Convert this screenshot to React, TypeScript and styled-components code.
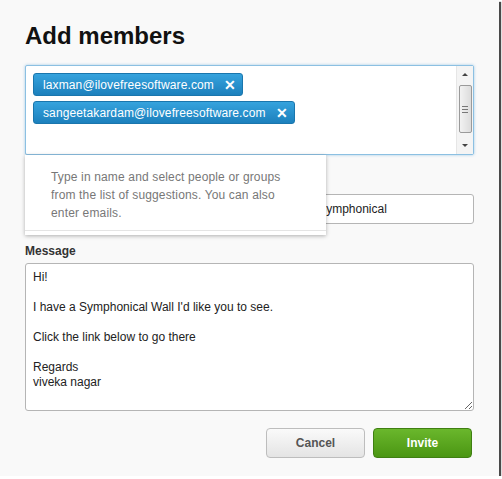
import React from 'react';
import styled, { createGlobalStyle } from 'styled-components';

const GlobalStyle = createGlobalStyle`
    html, body {
        margin: 0;
        padding: 0;
        background: #ffffff;
    }
    body {
        font-family: "Liberation Sans", Arial, sans-serif;
    }
`;

const Frame = styled.div`
    width: 499px;
    height: 476px;
    box-sizing: border-box;
    background: #f9f9f9;
    box-shadow: 2px 2px 1px #4a4a4a;
    padding: 22px 25px 0 25px;
    display: flex;
    flex-direction: column;
`;

const Title = styled.h1`
    margin: 0;
    font-size: 24px;
    line-height: 28px;
    font-weight: bold;
    color: #111;
`;

const RecipientsWrap = styled.div`
    position: relative;
    margin-top: 15px;
`;

const RecipientsBox = styled.div`
    height: 90px;
    box-sizing: border-box;
    border: 1px solid #8cc0e2;
    border-radius: 2px;
    background: #fff;
    box-shadow: 0 0 3px rgba(100, 170, 220, 0.6);
    display: flex;
`;

const ChipList = styled.div`
    flex: 1;
    padding: 7px 7px;
    display: flex;
    flex-direction: column;
    align-items: flex-start;
    gap: 5px;
`;

const Chip = styled.div`
    height: 23px;
    box-sizing: border-box;
    display: flex;
    align-items: center;
    padding: 0 6px 0 9px;
    border-radius: 3px;
    border: 1px solid #1a76ad;
    background: linear-gradient(#36a3dd, #1c80bd);
    color: #fff;
    font-size: 12px;
    letter-spacing: 0.12px;
`;

const ChipRemove = styled.span`
    margin-left: 10px;
    font-size: 14px;
    font-weight: bold;
    line-height: 1;
`;

const Scrollbar = styled.div`
    width: 16px;
    border-left: 1px solid #e6e6e6;
    background: #f4f4f4;
    display: flex;
    flex-direction: column;
    align-items: center;
`;

const Arrow = styled.div<{ $up?: boolean }>`
    width: 0;
    height: 0;
    margin: 7px 0;
    border-left: 3px solid transparent;
    border-right: 3px solid transparent;
    ${({ $up }) => ($up ? 'border-bottom: 3px solid #444;' : 'border-top: 3px solid #444;')}
`;

const Thumb = styled.div`
    width: 13px;
    height: 48px;
    margin-top: 2px;
    box-sizing: border-box;
    border: 1px solid #9a9a9a;
    border-radius: 2px;
    background: linear-gradient(90deg, #f2f2f2, #dcdcdc);
    display: flex;
    flex-direction: column;
    align-items: center;
    justify-content: center;
    gap: 2px;
`;

const Grip = styled.div`
    width: 6px;
    height: 1px;
    background: #777;
`;

const Spacer = styled.div`
    flex: 1;
`;

const HintPopup = styled.div`
    position: absolute;
    left: 0;
    top: 90px;
    width: 301px;
    box-sizing: border-box;
    padding: 13px 20px 9px 26px;
    background: #fff;
    box-shadow: 0 1px 4px rgba(0, 0, 0, 0.3);
    border-bottom: 4px solid #fff;
    z-index: 2;
    &::after {
        content: '';
        position: absolute;
        left: 0;
        right: 0;
        bottom: 0;
        border-bottom: 1px solid #e4e4e4;
    }
`;

const HintText = styled.p`
    margin: 0;
    font-size: 12px;
    line-height: 18px;
    letter-spacing: 0.15px;
    color: #777;
`;

const Label = styled.label<{ $gap: number }>`
    display: block;
    margin-top: ${({ $gap }) => $gap}px;
    margin-bottom: 4px;
    font-size: 12px;
    line-height: 15px;
    font-weight: bold;
    color: #333;
`;

const TextInput = styled.input`
    display: block;
    width: 100%;
    height: 30px;
    box-sizing: border-box;
    border: 1px solid #b5b5b5;
    border-radius: 3px;
    padding: 0 10px;
    font-family: "Liberation Sans", Arial, sans-serif;
    font-size: 12px;
    color: #222;
    background: #fff;
`;

const MessageArea = styled.textarea`
    display: block;
    width: 100%;
    height: 148px;
    box-sizing: border-box;
    border: 1px solid #b5b5b5;
    border-radius: 3px;
    padding: 6px 7px;
    font-family: "Liberation Sans", Arial, sans-serif;
    font-size: 12px;
    line-height: 15px;
    color: #222;
    background: #fff;
    resize: vertical;
`;

const Actions = styled.div`
    margin-top: 17px;
    padding-right: 2px;
    display: flex;
    justify-content: flex-end;
    gap: 8px;
`;

const Button = styled.button<{ $primary?: boolean }>`
    width: 99px;
    height: 30px;
    border-radius: 4px;
    font-family: "Liberation Sans", Arial, sans-serif;
    font-size: 12px;
    font-weight: bold;
    cursor: pointer;
    ${({ $primary }) =>
        $primary
            ? `
        border: 1px solid #3f7f12;
        background: linear-gradient(#6ab72c, #4b9613);
        color: #fff;
    `
            : `
        border: 1px solid #bdbdbd;
        background: linear-gradient(#fafafa, #e4e4e4);
        color: #555;
    `}
`;

const recipients = ['laxman@ilovefreesoftware.com', 'sangeetakardam@ilovefreesoftware.com'];

const message = `Hi!

I have a Symphonical Wall I'd like you to see.

Click the link below to go there

Regards
viveka nagar`;

export default function App() {
    return (
        <>
            <GlobalStyle />
            <Frame>
                <Title>Add members</Title>
                <RecipientsWrap>
                    <RecipientsBox>
                        <ChipList>
                            {recipients.map((r) => (
                                <Chip key={r}>
                                    {r}
                                    <ChipRemove>✕</ChipRemove>
                                </Chip>
                            ))}
                        </ChipList>
                        <Scrollbar>
                            <Arrow $up />
                            <Thumb>
                                <Grip />
                                <Grip />
                                <Grip />
                            </Thumb>
                            <Spacer />
                            <Arrow />
                        </Scrollbar>
                    </RecipientsBox>
                    <HintPopup>
                        <HintText>
                            Type in name and select people or groups from the list of suggestions. You can also
                            enter emails.
                        </HintText>
                    </HintPopup>
                </RecipientsWrap>
                <Label $gap={20}>Subject</Label>
                <TextInput defaultValue="Viveka Nagar has invited you to join the new Wall on Symphonical" />
                <Label $gap={20}>Message</Label>
                <MessageArea defaultValue={message} />
                <Actions>
                    <Button>Cancel</Button>
                    <Button $primary>Invite</Button>
                </Actions>
            </Frame>
        </>
    );
}
